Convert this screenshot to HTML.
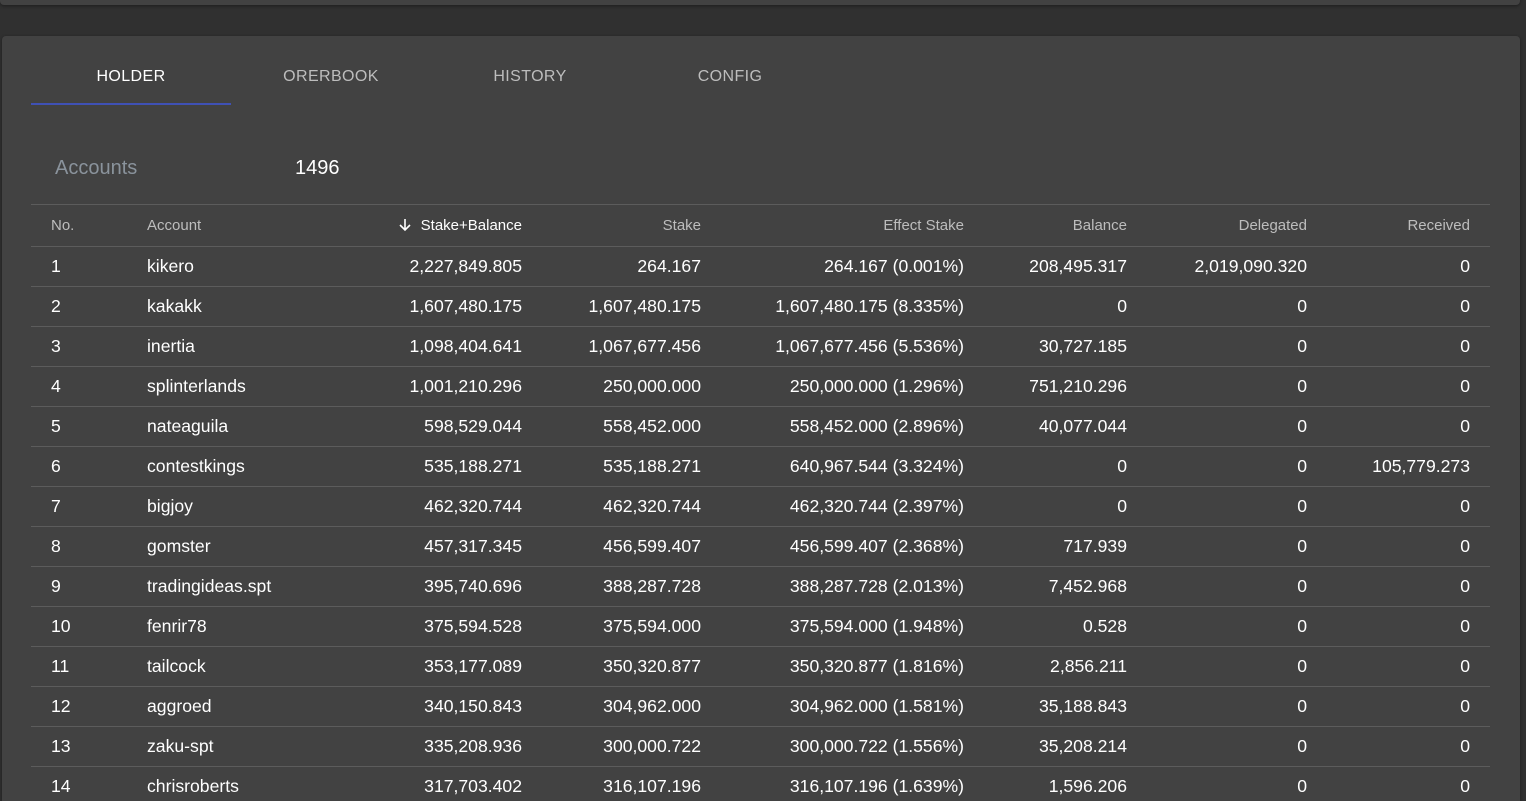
<!DOCTYPE html>
<html><head><style>
html,body{margin:0;width:1526px;height:801px;overflow:hidden;}
body{background:#303030;font-family:"Liberation Sans",Arial,sans-serif;position:relative}
.top{position:absolute;left:0;top:-10px;width:1520px;height:15px;background:#424242;border-radius:4px;box-shadow:0 1px 3px rgba(0,0,0,.4)}
.card{position:absolute;left:2px;top:36px;width:1518px;height:765px;background:#424242;border-radius:4px 4px 0 0;box-shadow:0 1px 3px rgba(0,0,0,.4);overflow:hidden}
.tab{position:absolute;top:32px;width:200px;text-align:center;font-size:16px;color:#bdbdbd;letter-spacing:.4px}
.tab.on{color:#fff}
.ind{position:absolute;left:29px;top:67px;width:200px;height:2px;background:#3f51b5}
.acc{position:absolute;left:53px;top:121px;font-size:20px;color:#8a939c}
.num{position:absolute;left:293px;top:121px;font-size:20px;color:#fff}
table{position:absolute;left:29px;top:168px;width:1459px;border-collapse:collapse;table-layout:fixed}
th,td{border-top:1px solid #5c5c5c;padding:0;text-align:right;white-space:nowrap}
th{height:41px;font-size:15px;color:#bdbdbd;font-weight:normal}
td{height:37px;padding-bottom:2px;font-size:17.6px;line-height:20px;color:#fff}
.l{text-align:left}
th.s{color:#fff}
</style></head><body>
<div class="top"></div>
<div class="card">
<div class="tab on" style="left:29px">HOLDER</div>
<div class="tab" style="left:229px">ORERBOOK</div>
<div class="tab" style="left:428px">HISTORY</div>
<div class="tab" style="left:628px">CONFIG</div>
<div class="ind"></div>
<div class="acc">Accounts</div>
<div class="num">1496</div>
<table>
<colgroup><col style="width:116px"><col style="width:120px"><col style="width:255px"><col style="width:179px"><col style="width:263px"><col style="width:163px"><col style="width:180px"><col style="width:163px"><col style="width:20px"></colgroup>
<tr><th class="l" style="padding-left:20px">No.</th><th class="l">Account</th><th class="s"><svg width="16" height="16" viewBox="0 0 16 16" style="vertical-align:-3px;margin-right:8px"><path d="M8 2v11M3 8l5 5 5-5" stroke="#fff" stroke-width="1.6" fill="none"/></svg>Stake+Balance</th><th>Stake</th><th>Effect Stake</th><th>Balance</th><th>Delegated</th><th>Received</th><th></th></tr>
<tr><td class="l" style="padding-left:20px">1</td><td class="l">kikero</td><td>2,227,849.805</td><td>264.167</td><td>264.167 (0.001%)</td><td>208,495.317</td><td>2,019,090.320</td><td>0</td><td></td></tr>
<tr><td class="l" style="padding-left:20px">2</td><td class="l">kakakk</td><td>1,607,480.175</td><td>1,607,480.175</td><td>1,607,480.175 (8.335%)</td><td>0</td><td>0</td><td>0</td><td></td></tr>
<tr><td class="l" style="padding-left:20px">3</td><td class="l">inertia</td><td>1,098,404.641</td><td>1,067,677.456</td><td>1,067,677.456 (5.536%)</td><td>30,727.185</td><td>0</td><td>0</td><td></td></tr>
<tr><td class="l" style="padding-left:20px">4</td><td class="l">splinterlands</td><td>1,001,210.296</td><td>250,000.000</td><td>250,000.000 (1.296%)</td><td>751,210.296</td><td>0</td><td>0</td><td></td></tr>
<tr><td class="l" style="padding-left:20px">5</td><td class="l">nateaguila</td><td>598,529.044</td><td>558,452.000</td><td>558,452.000 (2.896%)</td><td>40,077.044</td><td>0</td><td>0</td><td></td></tr>
<tr><td class="l" style="padding-left:20px">6</td><td class="l">contestkings</td><td>535,188.271</td><td>535,188.271</td><td>640,967.544 (3.324%)</td><td>0</td><td>0</td><td>105,779.273</td><td></td></tr>
<tr><td class="l" style="padding-left:20px">7</td><td class="l">bigjoy</td><td>462,320.744</td><td>462,320.744</td><td>462,320.744 (2.397%)</td><td>0</td><td>0</td><td>0</td><td></td></tr>
<tr><td class="l" style="padding-left:20px">8</td><td class="l">gomster</td><td>457,317.345</td><td>456,599.407</td><td>456,599.407 (2.368%)</td><td>717.939</td><td>0</td><td>0</td><td></td></tr>
<tr><td class="l" style="padding-left:20px">9</td><td class="l">tradingideas.spt</td><td>395,740.696</td><td>388,287.728</td><td>388,287.728 (2.013%)</td><td>7,452.968</td><td>0</td><td>0</td><td></td></tr>
<tr><td class="l" style="padding-left:20px">10</td><td class="l">fenrir78</td><td>375,594.528</td><td>375,594.000</td><td>375,594.000 (1.948%)</td><td>0.528</td><td>0</td><td>0</td><td></td></tr>
<tr><td class="l" style="padding-left:20px">11</td><td class="l">tailcock</td><td>353,177.089</td><td>350,320.877</td><td>350,320.877 (1.816%)</td><td>2,856.211</td><td>0</td><td>0</td><td></td></tr>
<tr><td class="l" style="padding-left:20px">12</td><td class="l">aggroed</td><td>340,150.843</td><td>304,962.000</td><td>304,962.000 (1.581%)</td><td>35,188.843</td><td>0</td><td>0</td><td></td></tr>
<tr><td class="l" style="padding-left:20px">13</td><td class="l">zaku-spt</td><td>335,208.936</td><td>300,000.722</td><td>300,000.722 (1.556%)</td><td>35,208.214</td><td>0</td><td>0</td><td></td></tr>
<tr><td class="l" style="padding-left:20px">14</td><td class="l">chrisroberts</td><td>317,703.402</td><td>316,107.196</td><td>316,107.196 (1.639%)</td><td>1,596.206</td><td>0</td><td>0</td><td></td></tr>
</table>
</div>
</body></html>
